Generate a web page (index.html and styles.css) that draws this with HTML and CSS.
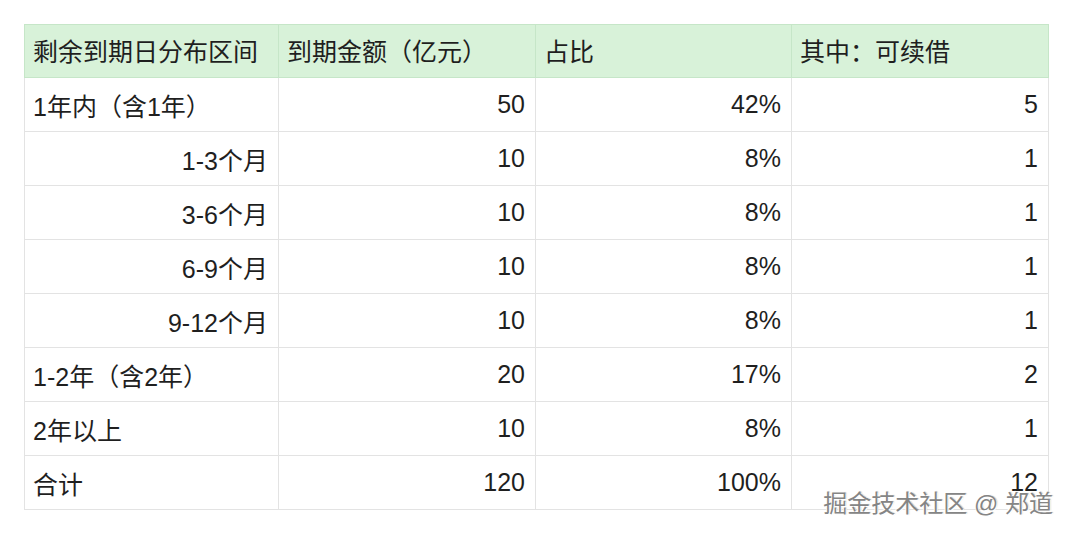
FILE: index.html
```html
<!DOCTYPE html>
<html lang="zh-CN">
<head>
<meta charset="utf-8">
<link rel="stylesheet" href="styles.css">
</head>
<body>
<div class="page">
  <table class="grid">
    <colgroup>
      <col class="c1"><col class="c2"><col class="c3"><col class="c4">
    </colgroup>
    <thead>
      <tr><th>剩余到期日分布区间</th><th>到期金额（亿元）</th><th>占比</th><th>其中：可续借</th></tr>
    </thead>
    <tbody>
      <tr><td>1年内（含1年）</td><td class="num">50</td><td class="num">42%</td><td class="num">5</td></tr>
      <tr><td class="num">1-3个月</td><td class="num">10</td><td class="num">8%</td><td class="num">1</td></tr>
      <tr><td class="num">3-6个月</td><td class="num">10</td><td class="num">8%</td><td class="num">1</td></tr>
      <tr><td class="num">6-9个月</td><td class="num">10</td><td class="num">8%</td><td class="num">1</td></tr>
      <tr><td class="num">9-12个月</td><td class="num">10</td><td class="num">8%</td><td class="num">1</td></tr>
      <tr><td>1-2年（含2年）</td><td class="num">20</td><td class="num">17%</td><td class="num">2</td></tr>
      <tr><td>2年以上</td><td class="num">10</td><td class="num">8%</td><td class="num">1</td></tr>
      <tr><td>合计</td><td class="num">120</td><td class="num">100%</td><td class="num">12</td></tr>
    </tbody>
  </table>
  <div class="watermark">掘金技术社区 @ 郑道</div>
</div>
</body>
</html>
```

FILE: styles.css
```css
html, body {
  margin: 0;
  padding: 0;
  background: #ffffff;
}
.page {
  position: relative;
  width: 1072px;
  height: 534px;
  padding: 24px 0 0 24px;
  box-sizing: border-box;
  font-family: "Liberation Sans", "Noto Sans CJK SC", sans-serif;
  color: #1f1f1f;
}
.grid {
  border-collapse: collapse;
  table-layout: fixed;
  width: 1024px;
  font-size: 25px;
}
.c1 { width: 254px; }
.c2 { width: 257px; }
.c3 { width: 256px; }
.c4 { width: 257px; }
.grid th, .grid td {
  border: 1px solid #e3e3e3;
  padding: 0 10px 0 8px;
  text-align: left;
  font-weight: normal;
  white-space: nowrap;
  box-sizing: border-box;
  vertical-align: middle;
}
.grid th {
  background: #d8f2d9;
  border-color: #c6e6c8;
  height: 53px;
  padding-bottom: 2px;
}
.grid td { height: 54px; }
.grid td.num { text-align: right; }
.watermark {
  position: absolute;
  right: 19px;
  bottom: 18px;
  font-size: 24px;
  color: #858585;
  text-shadow: 1px 1px 0 #ffffff, -1px -1px 0 #ffffff, 1px 0 1px rgba(0,0,0,0.25);
  line-height: 1;
}
```
